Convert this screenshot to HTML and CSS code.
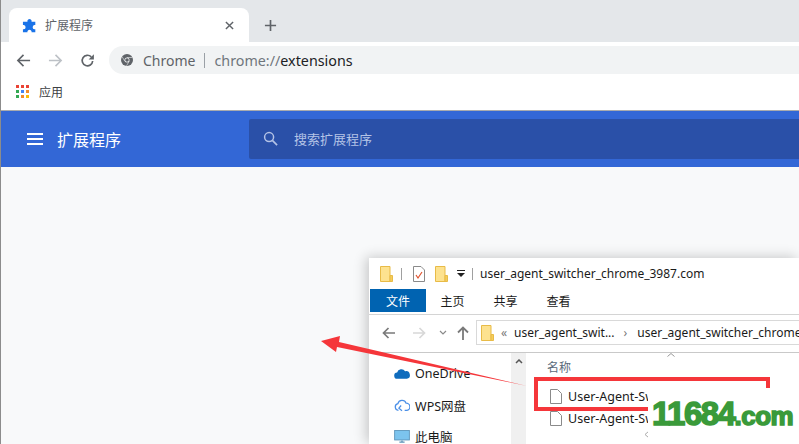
FILE: index.html
```html
<!DOCTYPE html>
<html lang="zh-CN">

<head>
  <meta charset="UTF-8">
  <title>扩展程序</title>
  <link rel="stylesheet" href="styles.css">
</head>

<body>
  <div class="browser">
    <div class="tabstrip">
      <div class="tab">
        <svg class="tab-icon" viewBox="0 0 16 16"><path d="M5.800 2.600a2.300 2.300 0 0 1 4.400 0V4h4v3.500h-1a2.300 2.300 0 0 0 0 4.500h1v3.200h-4v-1a2.300 2.300 0 0 0-4.400 0v1H1V12h1a2.300 2.300 0 0 0 0-4.500H1V4h4.800z" fill="#1a73e8"/></svg>
        <span class="tab-title">扩展程序</span>
        <svg class="tab-close" viewBox="0 0 10 10"><path d="M1 1l8 8M9 1l-8 8" stroke="#5f6368" stroke-width="1.600"/></svg>
      </div>
      <svg class="new-tab" viewBox="0 0 14 14"><path d="M7 1v12M1 7h12" stroke="#5f6368" stroke-width="1.800"/></svg>
    </div>

    <div class="toolbar">
      <svg class="nav-icon" viewBox="0 0 16 16"><path d="M15 8H2M8 2L2 8l6 6" fill="none" stroke="#5f6368" stroke-width="1.700"/></svg>
      <svg class="nav-icon" viewBox="0 0 16 16"><path d="M1 8h13M8 2l6 6-6 6" fill="none" stroke="#bdc1c6" stroke-width="1.700"/></svg>
      <svg class="nav-icon" viewBox="0 0 16 16"><path d="M13.500 8.500A5.600 5.600 0 1 1 12 4.200" fill="none" stroke="#5f6368" stroke-width="1.800"/><path d="M14.800 1.200v5.600H9.200z" fill="#5f6368"/></svg>
      <div class="omnibox">
        <svg class="chrome-icon" viewBox="0 0 12 12"><circle cx="6" cy="6" r="6" fill="#5f6368"/><circle cx="6" cy="6" r="2.500" fill="#f1f3f4"/><circle cx="6" cy="6" r="1.800" fill="#5f6368"/><path d="M6 3.500h5.400M3.800 7.200L1.200 2.800M8.200 7.200l-2.700 4.600" stroke="#f1f3f4" stroke-width=".6"/></svg>
        <span class="site-name">Chrome</span>
        <span class="omni-sep"></span>
        <span class="url"><span class="url-scheme">chrome://</span>extensions</span>
      </div>
    </div>

    <div class="bookmarks">
      <div class="apps-grid">
        <i class="c-red"></i><i class="c-red"></i><i class="c-red"></i>
        <i class="c-green"></i><i class="c-blue"></i><i class="c-orange"></i>
        <i class="c-green"></i><i class="c-orange"></i><i class="c-yellow"></i>
      </div>
      <span>应用</span>
    </div>

    <div class="ext-header">
      <div class="ext-title">
        <svg class="menu-icon" viewBox="0 0 16 12"><path d="M0 1h16M0 6h16M0 11h16" stroke="#fff" stroke-width="2"/></svg>
        <span>扩展程序</span>
      </div>
      <div class="ext-search">
        <svg class="search-icon" viewBox="0 0 16 16"><circle cx="6.500" cy="6.500" r="4.800" fill="none" stroke="#b4c3e6" stroke-width="1.600"/><path d="M10 10l5 5" stroke="#b4c3e6" stroke-width="1.800"/></svg>
        <span>搜索扩展程序</span>
      </div>
    </div>

    <div class="ext-page"></div>
  </div>

  <div class="explorer">
    <div class="ex-title">
      <svg class="folder" viewBox="0 0 13 16"><use href="#folder-shape"/></svg>
      <span class="ex-sep"></span>
      <svg class="qa-doc" viewBox="0 0 12 16"><path d="M.5.5h7.500l3.500 3.500v11.500H.5z" fill="#fff" stroke="#8a8a8a"/><path d="M3 9l2 3 4-6" fill="none" stroke="#e0532f" stroke-width="1.200"/></svg>
      <svg class="folder" viewBox="0 0 13 16"><use href="#folder-shape"/></svg>
      <svg class="qa-drop" viewBox="0 0 8 7"><path d="M0 0h8v1H0zM0 3h8L4 7z" fill="#222"/></svg>
      <span class="ex-sep ex-sep-name"></span>
      <span class="ex-name">user_agent_switcher_chrome_3987.com</span>
    </div>

    <div class="ribbon">
      <span class="rib-tab rib-file">文件</span>
      <span class="rib-tab">主页</span>
      <span class="rib-tab">共享</span>
      <span class="rib-tab">查看</span>
    </div>

    <div class="ex-nav">
      <svg class="ex-arrow" viewBox="0 0 14 12"><path d="M13 6H2M6.500 1L1.500 6l5 5" fill="none" stroke="#7a7a7a" stroke-width="1.700"/></svg>
      <svg class="ex-arrow" viewBox="0 0 14 12"><path d="M1 6h11M7.500 1l5 5-5 5" fill="none" stroke="#d8d8d8" stroke-width="1.700"/></svg>
      <svg class="ex-chev" viewBox="0 0 8 5"><path d="M1 1l3 3 3-3" fill="none" stroke="#8a8a8a" stroke-width="1.200"/></svg>
      <svg class="ex-up" viewBox="0 0 12 14"><path d="M6 14V2M1 6.500l5-5 5 5" fill="none" stroke="#7a7a7a" stroke-width="1.800"/></svg>
      <div class="ex-address">
        <svg class="folder" viewBox="0 0 13 16"><use href="#folder-shape"/></svg>
        <span class="crumb-mark">«</span>
        <span>user_agent_swit...</span>
        <span class="crumb-mark crumb-next">›</span>
        <span>user_agent_switcher_chrome_3987.com</span>
      </div>
    </div>

    <div class="ex-body">
      <div class="ex-side">
        <div class="side-item">
          <svg class="side-icon" viewBox="0 0 18 12"><path d="M4 12a3.500 3.500 0 0 1-.5-7A5 5 0 0 1 12.500 3.500 4.200 4.200 0 0 1 14.500 12z" fill="#0f6cbd"/></svg>
          <span>OneDrive</span>
        </div>
        <div class="side-item">
          <svg class="side-icon" viewBox="0 0 18 14"><path d="M5 12.500a3.800 3.800 0 0 1-.6-7.500 4.800 4.800 0 0 1 9.200-.6 4 4 0 0 1 .4 8.100H12M8 7l-2.500 3L9 13" fill="none" stroke="#4a8fe7" stroke-width="1.400"/></svg>
          <span>WPS网盘</span>
        </div>
        <div class="side-item">
          <svg class="side-icon" viewBox="0 0 18 15"><rect x=".5" y=".5" width="17" height="11" fill="#7cc4ee" stroke="#5b93b8"/><path d="M6 14h6M9 12v2" stroke="#5b93b8" stroke-width="1.500"/></svg>
          <span>此电脑</span>
        </div>
      </div>
      <div class="ex-scroll">
        <svg class="scroll-up" viewBox="0 0 8 5"><path d="M1 4l3-3 3 3" fill="none" stroke="#555" stroke-width="1.500"/></svg>
      </div>
      <div class="ex-files">
        <svg class="sort-mark" viewBox="0 0 8 4"><path d="M.5 3.500L4 .5l3.500 3" fill="none" stroke="#999"/></svg>
        <div class="col-head">名称</div>
        <div class="file-row">
          <svg class="file-icon" viewBox="0 0 12 15"><path d="M.5.500h7l4 4v10H.5z" fill="#fff" stroke="#8a8a8a"/></svg>
          <span>User-Agent-Sw</span>
        </div>
        <div class="file-row">
          <svg class="file-icon" viewBox="0 0 12 15"><path d="M.5.500h7l4 4v10H.5z" fill="#fff" stroke="#8a8a8a"/></svg>
          <span>User-Agent-Sw</span>
        </div>
        <svg class="hscroll-mark" viewBox="0 0 5 7"><path d="M4.500.5L1 3.500l3.500 3" fill="none" stroke="#aaa"/></svg>
      </div>
    </div>
  </div>

  <div class="red-box"></div>
  <svg class="red-arrow" viewBox="0 0 799 444"><polygon points="321,341 340,336 339,342 527,386 337,347 336,352" fill="#f5363a"/></svg>
  <div class="watermark"><span class="wm-num">11684</span><span class="wm-com">.com</span></div>

  <svg class="defs" width="0" height="0">
    <symbol id="folder-shape" viewBox="0 0 13 16"><path d="M.5.500h9.500v15H.5z" fill="#fde28f" stroke="#e8bb47"/><path d="M10 9.500h2.500v6H10z" fill="#f5cd5b" stroke="#e8bb47"/></symbol>
  </svg>
</body>

</html>
```

FILE: styles.css
```css
html,
body {
  margin: 0;
  padding: 0;
  height: 100%;
}

body {
  position: relative;
  width: 799px;
  height: 444px;
  overflow: hidden;
  background: #fff;
  font-family: "Noto Sans", "Noto Sans CJK SC", sans-serif;
}

.browser {
  display: flex;
  flex-direction: column;
  height: 444px;
  border-left: 1px solid #8c8c8c;
  box-sizing: border-box;
}

/* tabs */
.tabstrip {
  height: 42px;
  box-sizing: border-box;
  padding: 8px 0 0 8px;
  display: flex;
  align-items: center;
  background: #e4e7ea;
}

.tab {
  width: 240px;
  height: 34px;
  box-sizing: border-box;
  padding: 0 15px 0 13px;
  display: flex;
  align-items: center;
  background: #fff;
  border-radius: 8px 8px 0 0;
}

.tab-icon {
  width: 15px;
  height: 15px;
}

.tab-title {
  flex: 1;
  margin-left: 8px;
  font-size: 12px;
  color: #5f6368;
}

.tab-close {
  width: 9px;
  height: 9px;
}

.new-tab {
  width: 13px;
  height: 13px;
  margin-left: 15px;
}

/* toolbar */
.toolbar {
  height: 36px;
  box-sizing: border-box;
  padding: 4px 0;
  display: flex;
  align-items: center;
  background: #fff;
}

.nav-icon {
  width: 15px;
  height: 15px;
  margin-left: 15px;
  margin-right: 2px;
}

.omnibox {
  flex: 1;
  height: 28px;
  margin-left: 12px;
  padding-left: 12px;
  display: flex;
  align-items: center;
  background: #f1f3f4;
  border-radius: 14px 0 0 14px;
  font-size: 14px;
}

.chrome-icon {
  width: 12px;
  height: 12px;
}

.site-name {
  margin-left: 10px;
  color: #5f6368;
}

.omni-sep {
  width: 1px;
  height: 15px;
  margin: 0 9px;
  background: #9aa0a6;
}

.url {
  color: #202124;
  font-size: 14.300px;
}

.url-scheme {
  color: #6f767c;
}

/* bookmarks */
.bookmarks {
  height: 33px;
  box-sizing: border-box;
  padding: 0 0 5px 15px;
  display: flex;
  align-items: center;
  font-size: 12px;
  color: #3c4043;
  background: #fff;
  border-bottom: 1px solid #a9abae;
}

.apps-grid {
  display: grid;
  grid-template-columns: repeat(3, 3px);
  grid-auto-rows: 3px;
  gap: 2px;
  margin-right: 10px;
}

.c-red { background: #ea4335; }
.c-green { background: #34a853; }
.c-blue { background: #4285f4; }
.c-orange { background: #f28b2c; }
.c-yellow { background: #fbbc04; }

/* extensions page */
.ext-header {
  height: 56px;
  display: flex;
  align-items: center;
  background: #3367d6;
}

.ext-title {
  width: 248px;
  display: flex;
  align-items: center;
  box-sizing: border-box;
  padding-left: 26px;
  font-size: 16px;
  color: #fff;
}

.ext-title span {
  margin-left: 14px;
}

.menu-icon {
  width: 16px;
  height: 12px;
}

.ext-search {
  flex: 1;
  height: 40px;
  box-sizing: border-box;
  padding: 0 0 2px 14px;
  display: flex;
  align-items: center;
  background: #2a50a8;
  border-radius: 2px 0 0 2px;
  font-size: 13px;
  color: #b4c3e6;
}

.search-icon {
  width: 15px;
  height: 15px;
  margin-right: 16px;
}

.ext-page {
  flex: 1;
  background: #f8f9fa;
}

/* explorer window */
.explorer {
  position: absolute;
  left: 369px;
  top: 258px;
  width: 430px;
  height: 186px;
  display: flex;
  flex-direction: column;
  background: #fff;
  box-shadow: -3px -1px 12px rgba(0, 0, 0, 0.2);
  font-size: 12px;
  color: #1a1a1a;
}

.ex-title {
  height: 31px;
  flex: none;
  box-sizing: border-box;
  padding-left: 11px;
  display: flex;
  align-items: center;
}

.folder {
  width: 13px;
  height: 16px;
  flex: none;
}

.ex-sep {
  width: 1px;
  height: 12px;
  margin: 0 11px 0 8px;
  background: #a0a0a0;
}

.ex-sep-name {
  margin: 0 7px;
}

.qa-doc {
  width: 12px;
  height: 16px;
  margin-right: 10px;
}

.qa-drop {
  width: 8px;
  height: 7px;
  margin-left: 9px;
}

.ex-name {
  font-size: 12px;
}

.ribbon {
  height: 26px;
  flex: none;
  box-sizing: border-box;
  padding-bottom: 3px;
  display: flex;
  align-items: center;
  border-bottom: 1px solid #d4d4d4;
}

.rib-tab {
  width: 53px;
  padding-top: 2px;
  text-align: center;
}

.rib-file {
  width: 56px;
  height: 23px;
  box-sizing: border-box;
  margin-left: 1px;
  line-height: 21px;
  background: #0063b1;
  color: #fff;
}

.ex-nav {
  height: 38px;
  flex: none;
  box-sizing: border-box;
  padding: 0 0 2px 13px;
  display: flex;
  align-items: center;
  border-bottom: 1px solid #c9c9c9;
}

.ex-arrow {
  width: 14px;
  height: 12px;
  margin-right: 16px;
}

.ex-chev {
  width: 8px;
  height: 5px;
  margin-left: -3px;
  margin-right: 10px;
}

.ex-up {
  width: 12px;
  height: 14px;
  margin-right: 7px;
}

.ex-address {
  flex: 1;
  min-width: 0;
  height: 23px;
  padding-left: 4px;
  display: flex;
  align-items: center;
  white-space: nowrap;
  overflow: hidden;
  border: 1px solid #d9d9d9;
  border-right: 0;
  font-size: 12px;
}

.crumb-mark {
  margin: 0 7px;
  color: #777;
}

.crumb-next {
  margin: 0 10px 0 9px;
}

.ex-body {
  flex: 1;
  min-height: 0;
  display: flex;
}

.ex-side {
  width: 142px;
  box-sizing: border-box;
  padding: 5px 0 0 25px;
  font-size: 12.500px;
}

.side-item {
  height: 31.500px;
  display: flex;
  align-items: center;
  white-space: nowrap;
}

.side-icon {
  width: 16px;
  height: 13px;
  margin-right: 5px;
  flex: none;
}

.ex-scroll {
  width: 15px;
  background: #f0f0f0;
  text-align: center;
}

.scroll-up {
  width: 8px;
  height: 5px;
  display: block;
  margin: 6px auto 0;
}

.ex-files {
  position: relative;
  flex: 1;
  padding: 5px 0 0 21px;
}

.sort-mark {
  position: absolute;
  left: 141px;
  top: 0;
  width: 8px;
  height: 4px;
}

.hscroll-mark {
  position: absolute;
  left: 118px;
  top: 78px;
  width: 5px;
  height: 7px;
}

.col-head {
  height: 21px;
  margin-bottom: 7px;
  line-height: 20px;
  color: #5a6a7a;
}

.file-row {
  height: 21.500px;
  display: flex;
  align-items: center;
  font-size: 12.500px;
  margin-left: 3px;
  white-space: nowrap;
}

.file-icon {
  width: 12px;
  height: 15px;
  margin-right: 6px;
}

/* annotations on top of the screenshot */
.red-box {
  position: absolute;
  left: 534px;
  top: 377px;
  width: 228px;
  height: 26px;
  border: 4px solid #f5363a;
}

.red-arrow {
  position: absolute;
  left: 0;
  top: 0;
  width: 799px;
  height: 444px;
}

.watermark {
  position: absolute;
  right: 0;
  bottom: 0;
  width: 151px;
  height: 56px;
  box-sizing: border-box;
  padding: 8px 0 0 4px;
  background: #fff;
  font-family: "Liberation Sans", sans-serif;
  font-weight: 700;
  line-height: 36px;
  color: #3a9a3a;
  white-space: nowrap;
  -webkit-text-stroke: 1.500px #3a9a3a;
}

.wm-num {
  font-size: 33px;
  letter-spacing: -1.500px;
}

.wm-com {
  font-size: 26px;
  letter-spacing: -.5px;
}

.defs {
  position: absolute;
}
```
